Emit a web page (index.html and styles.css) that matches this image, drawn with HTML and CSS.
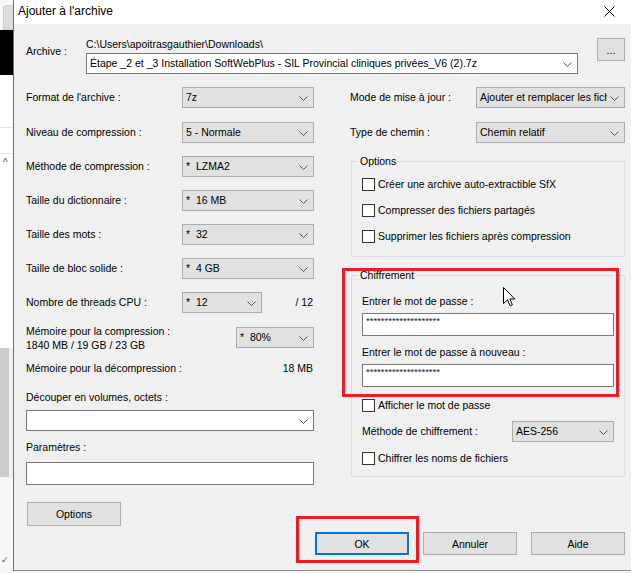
FILE: index.html
```html
<!DOCTYPE html>
<html lang="fr">
<head>
<meta charset="utf-8">
<title>Ajouter à l'archive</title>
<link rel="stylesheet" href="styles.css">
</head>
<body>
<div class="screen">
  <div class="bgapp">
    <div class="bg-top"><div class="bg-tab"></div></div>
    <div class="bg-black"></div>
    <div class="bg-row1"></div>
    <div class="bg-row2"></div>
    <div class="bg-list"><span class="caret">^</span></div>
    <div class="bg-thumb"></div>
    <div class="bg-rest"><span class="tick">✓</span></div>
  </div>
  <div class="dialog">
    <div class="titlebar">
      <span class="title">Ajouter à l'archive</span>
      <svg class="close" width="11" height="11" viewBox="0 0 11 11"><path d="M0.5 0.5 L10.5 10.5 M10.5 0.5 L0.5 10.5" stroke="#000" stroke-width="1" fill="none"/></svg>
    </div>
    <div class="body">
      <div class="archive-row">
        <div class="archive-label">Archive :</div>
        <div class="archive-main">
          <div class="path">C:\Users\apoitrasgauthier\Downloads\</div>
          <div class="combo edit">
            <span class="ctext">Étape _2 et _3 Installation SoftWebPlus - SIL Provincial cliniques privées_V6 (2).7z</span>
            <svg class="chev" width="9" height="5" viewBox="0 0 9 5"><path d="M0.5 0.5 L4.5 4.5 L8.5 0.5" stroke="#555" fill="none"/></svg>
          </div>
        </div>
        <button class="btn browse">...</button>
      </div>

      <div class="columns">
        <div class="col-left">
          <div class="frow"><span class="lbl">Format de l'archive :</span><div class="combo w132"><span class="ctext">7z</span><svg class="chev" width="9" height="5" viewBox="0 0 9 5"><path d="M0.5 0.5 L4.5 4.5 L8.5 0.5" stroke="#555" fill="none"/></svg></div></div>
          <div class="frow r2"><span class="lbl">Niveau de compression :</span><div class="combo w132"><span class="ctext">5 - Normale</span><svg class="chev" width="9" height="5" viewBox="0 0 9 5"><path d="M0.5 0.5 L4.5 4.5 L8.5 0.5" stroke="#555" fill="none"/></svg></div></div>
          <div class="frow"><span class="lbl">Méthode de compression :</span><div class="combo w132"><span class="ctext">*  LZMA2</span><svg class="chev" width="9" height="5" viewBox="0 0 9 5"><path d="M0.5 0.5 L4.5 4.5 L8.5 0.5" stroke="#555" fill="none"/></svg></div></div>
          <div class="frow"><span class="lbl">Taille du dictionnaire :</span><div class="combo w132"><span class="ctext">*  16 MB</span><svg class="chev" width="9" height="5" viewBox="0 0 9 5"><path d="M0.5 0.5 L4.5 4.5 L8.5 0.5" stroke="#555" fill="none"/></svg></div></div>
          <div class="frow"><span class="lbl">Taille des mots :</span><div class="combo w132"><span class="ctext">*  32</span><svg class="chev" width="9" height="5" viewBox="0 0 9 5"><path d="M0.5 0.5 L4.5 4.5 L8.5 0.5" stroke="#555" fill="none"/></svg></div></div>
          <div class="frow"><span class="lbl">Taille de bloc solide :</span><div class="combo w132"><span class="ctext">*  4 GB</span><svg class="chev" width="9" height="5" viewBox="0 0 9 5"><path d="M0.5 0.5 L4.5 4.5 L8.5 0.5" stroke="#555" fill="none"/></svg></div></div>
          <div class="frow"><span class="lbl">Nombre de threads CPU :</span><div class="combo w80"><span class="ctext">*  12</span><svg class="chev" width="9" height="5" viewBox="0 0 9 5"><path d="M0.5 0.5 L4.5 4.5 L8.5 0.5" stroke="#555" fill="none"/></svg></div><span class="of">/ 12</span></div>
          <div class="memrow">
            <div class="memtext"><div>Mémoire pour la compression :</div><div>1840 MB / 19 GB / 23 GB</div></div>
            <div class="combo w78"><span class="ctext">*  80%</span><svg class="chev" width="9" height="5" viewBox="0 0 9 5"><path d="M0.5 0.5 L4.5 4.5 L8.5 0.5" stroke="#555" fill="none"/></svg></div>
          </div>
          <div class="decomp"><span>Mémoire pour la décompression :</span><span>18 MB</span></div>
          <div class="blbl split">Découper en volumes, octets :</div>
          <div class="combo edit full"><span class="ctext"></span><svg class="chev" width="9" height="5" viewBox="0 0 9 5"><path d="M0.5 0.5 L4.5 4.5 L8.5 0.5" stroke="#555" fill="none"/></svg></div>
          <div class="blbl params">Paramètres :</div>
          <div class="textbox"></div>
          <button class="btn opts">Options</button>
        </div>

        <div class="col-right">
          <div class="frow"><span class="lbl">Mode de mise à jour :</span><div class="combo w149"><span class="ctext">Ajouter et remplacer les fich</span><svg class="chev" width="9" height="5" viewBox="0 0 9 5"><path d="M0.5 0.5 L4.5 4.5 L8.5 0.5" stroke="#555" fill="none"/></svg></div></div>
          <div class="frow r2"><span class="lbl">Type de chemin :</span><div class="combo w149"><span class="ctext">Chemin relatif</span><svg class="chev" width="9" height="5" viewBox="0 0 9 5"><path d="M0.5 0.5 L4.5 4.5 L8.5 0.5" stroke="#555" fill="none"/></svg></div></div>

          <div class="group g-options">
            <div class="legend">Options</div>
            <div class="chk first"><span class="box"></span><span>Créer une archive auto-extractible SfX</span></div>
            <div class="chk"><span class="box"></span><span>Compresser des fichiers partagés</span></div>
            <div class="chk"><span class="box"></span><span>Supprimer les fichiers après compression</span></div>
          </div>

          <div class="group g-crypt">
            <div class="legend">Chiffrement</div>
            <div class="blbl pw1">Entrer le mot de passe :</div>
            <div class="pwbox">********************</div>
            <div class="blbl pw2">Entrer le mot de passe à nouveau :</div>
            <div class="pwbox">********************</div>
            <div class="chk show"><span class="box"></span><span>Afficher le mot de passe</span></div>
            <div class="frow meth"><span class="lbl">Méthode de chiffrement :</span><div class="combo w102"><span class="ctext">AES-256</span><svg class="chev" width="9" height="5" viewBox="0 0 9 5"><path d="M0.5 0.5 L4.5 4.5 L8.5 0.5" stroke="#555" fill="none"/></svg></div></div>
            <div class="chk names"><span class="box"></span><span>Chiffrer les noms de fichiers</span></div>
            <div class="highlight hl-crypt"></div>
          </div>
        </div>
      </div>

      <div class="footer">
        <span class="okwrap"><button class="btn ok">OK</button><span class="highlight hl-ok"></span></span>
        <button class="btn cancel">Annuler</button>
        <button class="btn help">Aide</button>
      </div>
    </div>
  </div>
</div>
<svg class="cursor" width="13" height="20" viewBox="0 0 13 20"><path d="M0.5 0.5 L0.5 16.5 L4.5 12.8 L7.2 18.8 L9.4 17.8 L6.8 12 L11.8 12 Z" fill="#fff" stroke="#000" stroke-width="1" stroke-linejoin="miter"/></svg>
</body>
</html>
```

FILE: styles.css
```css
* { box-sizing: border-box; }
html, body { margin: 0; padding: 0; }
body {
  width: 631px;
  height: 573px;
  overflow: hidden;
  position: relative;
  background: #f6f6f6;
  font-family: "Liberation Sans", Arial, sans-serif;
  font-size: 10.5px;
  line-height: 13px;
  color: #000;
}
.screen { display: flex; height: 573px; }

/* background application strip */
.bgapp { width: 13px; flex: none; display: flex; flex-direction: column; background: #fff; }
.bg-top { height: 30px; padding: 5px 0 0 3px; background: #f7f7f7; }
.bg-tab { height: 25px; background: #dcdcdc; border-radius: 4px 0 0 0; border: 1px solid #cfcfcf; border-right: none; }
.bg-black { height: 45px; background: #000; }
.bg-row1 { height: 53px; background: #fff; border-bottom: 1px solid #e4e4e4; }
.bg-row2 { height: 26px; background: #fff; border-bottom: 1px solid #e4e4e4; }
.bg-list { height: 194px; background: #fff; padding: 4px 0 0 3px; font-size: 10px; color: #444; }
.caret { display: block; line-height: 10px; }
.bg-thumb { height: 129px; background: #f0f0f0; border-left: 9px solid #cdcdcd; }
.bg-rest { flex: 1; background: #f7f7f7; padding: 78px 0 0 1px; font-size: 9px; color: #555; }
.tick { display: block; line-height: 10px; }

/* dialog */
.dialog {
  width: 618px;
  height: 571px;
  flex: none;
  border-left: 1px solid #707070;
  display: flex;
  flex-direction: column;
}
.titlebar {
  height: 24px;
  flex: none;
  background: #fff;
  display: flex;
  align-items: center;
  padding: 0 16px 2px 4px;
  font-size: 12px;
}
.close { margin-left: auto; }
.body {
  flex: 1;
  background: #f0f0f0;
  border-bottom: 1px solid #8c8c8c;
  padding: 14px 6px 15px 12px;
  display: flex;
  flex-direction: column;
}

/* archive row */
.archive-row { display: grid; grid-template-columns: 60px 492px 1fr; }
.archive-label { padding-top: 7px; }
.path { height: 13px; }
.archive-main .combo { margin-top: 2px; }
.browse { justify-self: end; width: 28px; height: 23px; margin-top: 13px; padding-bottom: 5px; }

/* generic controls */
.combo {
  height: 21px;
  flex: none;
  display: flex;
  align-items: center;
  background: #e1e1e1;
  border: 1px solid #adadad;
  padding: 0 5px 0 3px;
  overflow: hidden;
}
.combo.edit { background: #fff; border-color: #7a7a7a; }
.ctext { flex: 1; white-space: pre; overflow: hidden; }
.chev { flex: none; margin-left: 3px; margin-top: 1px; }
.w132 { width: 132px; }
.w80 { width: 80px; }
.w78 { width: 78px; }
.w149 { width: 149px; }
.w102 { width: 102px; }
.full { width: 288px; }

.btn {
  font-family: inherit;
  font-size: 10.5px;
  color: #000;
  background: #e1e1e1;
  border: 1px solid #adadad;
  padding: 0;
  margin: 0;
}

/* columns */
.columns {
  display: grid;
  grid-template-columns: 288px 1fr;
  column-gap: 36px;
  margin-top: 13px;
  align-items: start;
}
.col-left, .col-right { display: flex; flex-direction: column; }
.frow { display: flex; align-items: center; height: 21px; }
.frow + .frow { margin-top: 13px; }
.frow.r2 { margin-top: 14px; }
.lbl { flex: 1; white-space: nowrap; }
.col-left .lbl { flex: none; width: 156px; }
.of { margin-left: auto; padding-right: 1px; }

.memrow { display: flex; height: 28px; margin-top: 11px; }
.memtext { flex: 1; line-height: 14px; }
.memrow .combo { margin-top: 3px; }
.decomp { display: flex; justify-content: space-between; margin-top: 10px; padding-right: 1px; }
.blbl { height: 13px; white-space: nowrap; }
.split { margin-top: 16px; }
.split + .combo { margin-top: 6px; }
.params { margin-top: 10px; }
.textbox { margin-top: 8px; height: 23px; width: 288px; background: #fff; border: 1px solid #7a7a7a; }
.opts { width: 94px; height: 24px; margin: 17px 0 0 1px; }

/* group boxes */
.group {
  margin-left: 1px;
  border: 1px solid #dcdcdc;
  padding: 0 10px 13px 10px;
  display: flex;
  flex-direction: column;
}
.g-options { margin-top: 18px; }
.g-crypt { margin-top: 18px; padding-bottom: 11px; position: relative; }
.legend {
  align-self: flex-start;
  margin: -7px 0 0 -4px;
  padding: 0 2px;
  background: #f0f0f0;
  height: 13px;
}
.chk { display: flex; align-items: center; height: 13px; margin-top: 13px; }
.chk.first { margin-top: 10px; }
.box { width: 13px; height: 13px; flex: none; background: #fff; border: 1px solid #333; margin-right: 3px; }

.pw1 { margin-top: 13px; }
.pwbox {
  margin-top: 5px;
  height: 23px;
  background: #fff;
  border: 1px solid #7a7a7a;
  padding: 1px 0 0 3px;
  font-size: 9.5px;
  line-height: 12px;
  color: #1a1a40;
  overflow: hidden;
  white-space: nowrap;
}
.pw2 { margin-top: 10px; }
.chk.show { margin-top: 12px; }
.frow.meth { margin-top: 9px; }
.chk.names { margin-top: 10px; }

/* red annotation boxes */
.highlight { position: absolute; border: 3px solid #ec1c24; pointer-events: none; }
.hl-crypt { left: -10px; top: -8px; width: 277px; height: 129px; }

/* footer */
.footer { margin-top: auto; display: flex; justify-content: flex-end; }
.okwrap { position: relative; display: block; }
.ok { width: 94px; height: 23px; border: 2px solid #0078d7; display: block; }
.hl-ok { left: -19px; top: -16px; width: 123px; height: 47px; }
.cancel { width: 94px; height: 23px; margin-left: 14px; }
.help { width: 94px; height: 23px; margin-left: 14px; }

.cursor { position: absolute; left: 503px; top: 287px; }
```
